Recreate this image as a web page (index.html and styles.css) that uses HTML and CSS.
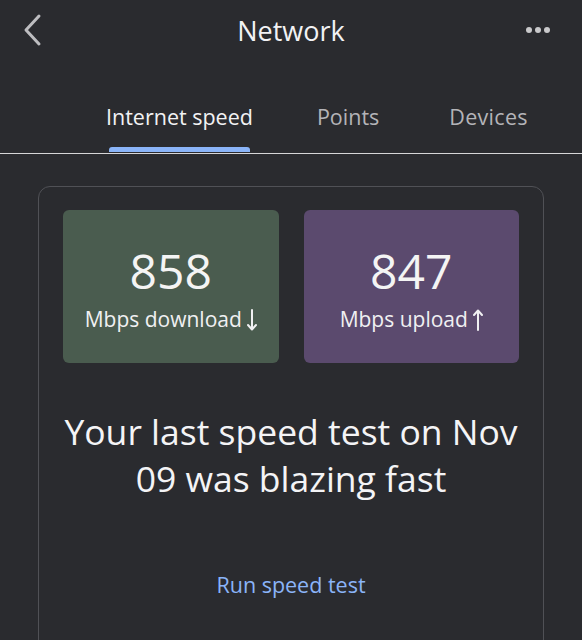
FILE: index.html
```html
<!DOCTYPE html>
<html>
<head>
<meta charset="utf-8">
<link rel="stylesheet" href="styles.css">
</head>
<body>
<div class="app">
  <header class="topbar">
    <button class="back" aria-label="Back">
      <svg width="22" height="34" viewBox="0 0 22 34"><path d="M18 3 L5 17 L18 31" fill="none" stroke="#bdbdc0" stroke-width="3" stroke-linecap="round" stroke-linejoin="round"/></svg>
    </button>
    <h1 class="title">Network</h1>
    <button class="more" aria-label="More">
      <svg width="26" height="8" viewBox="0 0 26 8"><circle cx="4" cy="4" r="3" fill="#c9c9cb"/><circle cx="13" cy="4" r="3" fill="#c9c9cb"/><circle cx="22" cy="4" r="3" fill="#c9c9cb"/></svg>
    </button>
  </header>
  <nav class="tabs">
    <div class="tab active">Internet speed</div>
    <div class="tab">Points</div>
    <div class="tab">Devices</div>
  </nav>
  <section class="card">
    <div class="stats">
      <div class="stat down">
        <div class="num">858</div>
        <div class="label">Mbps download<svg class="arrow" width="10" height="22" viewBox="0 0 10 22"><path d="M5 1 V20 M1 16 L5 20.5 L9 16" fill="none" stroke="#f0f0f2" stroke-width="2" stroke-linecap="round" stroke-linejoin="round"/></svg></div>
      </div>
      <div class="stat up">
        <div class="num">847</div>
        <div class="label">Mbps upload<svg class="arrow" width="10" height="22" viewBox="0 0 10 22"><path d="M5 21 V2 M1 6 L5 1.5 L9 6" fill="none" stroke="#f0f0f2" stroke-width="2" stroke-linecap="round" stroke-linejoin="round"/></svg></div>
      </div>
    </div>
    <p class="summary">Your last speed test on Nov 09 was blazing fast</p>
    <a class="run">Run speed test</a>
  </section>
</div>
</body>
</html>
```
FILE: styles.css
```css
html, body {
  margin: 0;
  padding: 0;
  background: #2a2b2f;
  height: 100%;
  overflow: hidden;
}
.app {
  font-family: "Open Sans", Roboto, sans-serif;
  color: #ececee;
  width: 582px;
}
.topbar {
  height: 60px;
  display: flex;
  align-items: center;
  justify-content: space-between;
  padding: 0 31px 0 21px;
  position: relative;
}
.back, .more {
  background: none;
  border: 0;
  padding: 0;
  display: flex;
  align-items: center;
}
.title {
  margin: 0;
  font-size: 27px;
  font-weight: 400;
  color: #f2f2f4;
  position: absolute;
  left: 0;
  right: 0;
  text-align: center;
  pointer-events: none;
}
.tabs {
  display: flex;
  align-items: center;
  padding-left: 106px;
  border-bottom: 1px solid #d6d6d8;
  box-sizing: border-box;
  height: 94px;
}
.tab {
  font-size: 21.5px;
  color: #b4b4b8;
  position: relative;
  padding-top: 20px;
}
.tab + .tab {
  margin-left: 64px;
}
.tab:last-child {
  margin-left: 70px;
  letter-spacing: 0.3px;
}
.tab.active {
  color: #f2f2f4;
}
.tab.active::after {
  content: "";
  position: absolute;
  left: 3px;
  right: 3px;
  bottom: -21px;
  height: 5px;
  background: #8ab4f8;
  border-radius: 3px 3px 0 0;
}
.card {
  margin: 32px 38px 0;
  border: 1.5px solid #505156;
  border-radius: 12px;
  padding: 23px 24px 40px;
  height: 500px;
  box-sizing: border-box;
  display: flex;
  flex-direction: column;
  align-items: center;
}
.stats {
  display: flex;
  gap: 25px;
  width: 100%;
}
.stat {
  flex: 1;
  height: 153px;
  border-radius: 6px;
  display: flex;
  flex-direction: column;
  align-items: center;
  justify-content: center;
}
.stat.down { background: #4a5c4f; }
.stat.up { background: #5b4a6e; }
.num {
  font-size: 48px;
  line-height: 52px;
  color: #f4f4f4;
  margin-top: 4px;
}
.label {
  font-size: 21px;
  line-height: 26px;
  color: #f0f0f2;
  margin-top: 9px;
  display: flex;
  align-items: center;
}
.arrow {
  margin-left: 5px;
  margin-top: 1px;
}
.summary {
  margin: 45px 0 0;
  font-size: 35.5px;
  line-height: 47px;
  text-align: center;
  color: #f4f4f6;
  width: 470px;
}
.run {
  margin-top: 71px;
  font-size: 21.5px;
  line-height: 24px;
  color: #8ab4f8;
}
```
